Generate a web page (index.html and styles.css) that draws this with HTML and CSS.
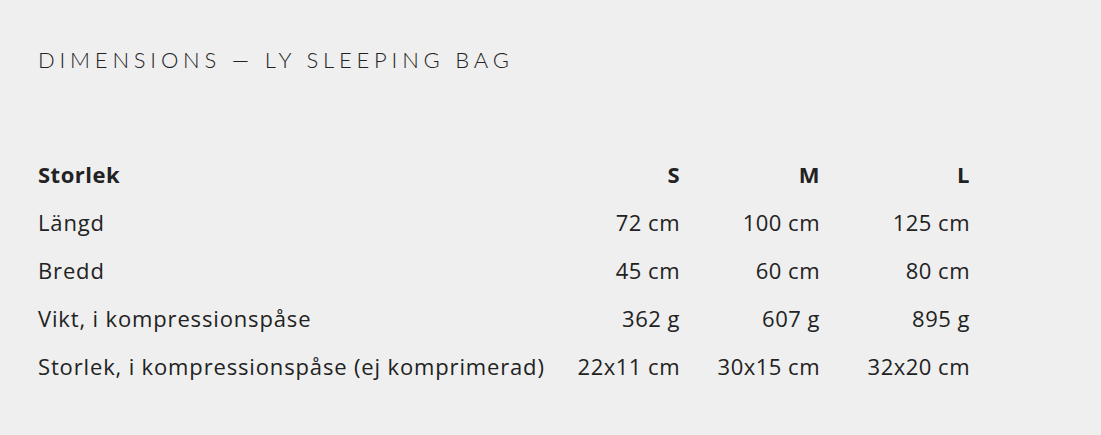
FILE: index.html
```html
<!DOCTYPE html>
<html lang="sv">
<head>
<meta charset="utf-8">
<title>Dimensions — LY Sleeping Bag</title>
<link rel="stylesheet" href="styles.css">
</head>
<body>
<main class="page">
  <h1 class="title">DIMENSIONS — LY SLEEPING BAG</h1>
  <table class="dims">
    <thead>
      <tr>
        <th class="label">Storlek</th>
        <th class="num">S</th>
        <th class="num">M</th>
        <th class="num">L</th>
      </tr>
    </thead>
    <tbody>
      <tr><td class="label">Längd</td><td class="num">72 cm</td><td class="num">100 cm</td><td class="num">125 cm</td></tr>
      <tr><td class="label">Bredd</td><td class="num">45 cm</td><td class="num">60 cm</td><td class="num">80 cm</td></tr>
      <tr><td class="label">Vikt, i kompressionspåse</td><td class="num">362 g</td><td class="num">607 g</td><td class="num">895 g</td></tr>
      <tr><td class="label">Storlek, i kompressionspåse (ej komprimerad)</td><td class="num">22x11 cm</td><td class="num">30x15 cm</td><td class="num">32x20 cm</td></tr>
    </tbody>
  </table>
</main>
</body>
</html>
```

FILE: styles.css
```css
html, body {
  margin: 0;
  padding: 0;
  background: #efefef;
}
body {
  font-family: "Lato", "Liberation Sans", sans-serif;
  color: #222;
}
.page {
  padding: 46px 38px 0 38px;
}
.title {
  margin: 0;
  font-size: 22px;
  font-weight: 300;
  letter-spacing: 4.8px;
  line-height: 28px;
  color: #222;
}
.dims {
  margin-top: 75.5px;
  border-collapse: collapse;
  font-family: "Open Sans", "Lato", sans-serif;
  font-size: 22px;
  letter-spacing: 0.85px;
}
.dims th, .dims td {
  padding: 0;
  height: 48px;
  vertical-align: middle;
}
.dims th {
  font-weight: 700;
  letter-spacing: 0.5px;
}
.label {
  text-align: left;
  width: 520px;
}
.num {
  text-align: right;
  white-space: nowrap;
}
.dims .num:nth-child(2) { width: 122px; }
.dims .num:nth-child(3) { width: 140px; }
.dims .num:nth-child(4) { width: 150px; }
.dims td.num { letter-spacing: 0.5px; }
```
